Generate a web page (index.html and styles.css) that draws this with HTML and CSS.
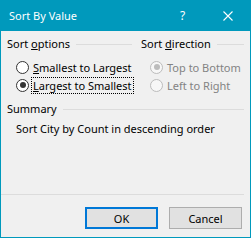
FILE: index.html
```html
<!DOCTYPE html>
<html lang="en">
<head>
    <meta charset="UTF-8">
    <title>Sort By Value</title>
    <link rel="stylesheet" href="styles.css">
</head>
<body>
    <div class="dialog">
        <div class="titlebar">
            <span class="title">Sort By Value</span>
            <span class="help">?</span>
            <span class="close">
                <svg width="10" height="10" viewBox="0 0 10 10">
                    <path d="M0.5 0.5 L9.5 9.5 M9.5 0.5 L0.5 9.5" stroke="#fff" stroke-width="1.1" fill="none"/>
                </svg>
            </span>
        </div>

        <div class="content">
            <div class="groups">
                <div class="group">
                    <div class="group-head"><span>Sort <u>o</u>ptions</span><i class="rule"></i></div>
                    <div class="radio">
                        <span class="circle"></span>
                        <span class="label"><u>S</u>mallest to Largest</span>
                    </div>
                    <div class="radio">
                        <span class="circle checked"></span>
                        <span class="label focused"><u>L</u>argest to Smallest</span>
                    </div>
                </div>
                <div class="group">
                    <div class="group-head"><span>Sort <u>d</u>irection</span><i class="rule"></i></div>
                    <div class="radio disabled">
                        <span class="circle checked"></span>
                        <span class="label">Top to Bottom</span>
                    </div>
                    <div class="radio disabled">
                        <span class="circle"></span>
                        <span class="label">Left to Right</span>
                    </div>
                </div>
            </div>

            <div class="group-head summary-head"><span>Summary</span><i class="rule"></i></div>
            <p class="summary">Sort City by Count in descending order</p>
        </div>

        <div class="footer">
            <div class="buttons">
                <button class="btn default">OK</button>
                <button class="btn">Cancel</button>
            </div>
        </div>
    </div>
</body>
</html>
```

FILE: styles.css
```css
/* dialog window */
body {
    margin: 0;
    font-family: "Noto Sans", "Liberation Sans", sans-serif;
    font-size: 11px;
    color: #000;
}

.dialog {
    width: 251px;
    height: 238px;
    box-sizing: border-box;
    border: 1px solid #0099bc;
    border-top: none;
    background-color: #f0f0f0;
    display: flex;
    flex-direction: column;
}

.titlebar {
    height: 31px;
    flex: none;
    margin: 0 -1px;
    background-color: #0099bc;
    color: #fff;
    display: flex;
    align-items: center;
}

.title {
    flex: 1;
    padding-left: 9px;
    font-size: 11px;
}

.help {
    width: 45px;
    text-align: center;
    font-size: 12px;
}

.close {
    width: 46px;
    display: flex;
    justify-content: center;
}

/* body */
.content {
    flex: 1;
    padding: 5px 6px 0 6px;
}

.groups {
    display: grid;
    grid-template-columns: 125px 1fr;
    column-gap: 9px;
}

.group-head {
    display: flex;
    align-items: center;
    height: 16px;
    line-height: 16px;
}

.rule {
    flex: 1;
    height: 1px;
    margin-left: 6px;
    background-color: #dcdcdc;
}

.group .group-head {
    margin-bottom: 6px;
}

.radio {
    display: flex;
    align-items: center;
    height: 18px;
    padding-left: 9px;
}

.circle {
    width: 11px;
    height: 11px;
    border: 1px solid #333;
    border-radius: 50%;
    background-color: #fff;
    display: flex;
    align-items: center;
    justify-content: center;
    flex: none;
}

.circle.checked::after {
    content: "";
    width: 6px;
    height: 6px;
    border-radius: 50%;
    background-color: #333;
}

.label {
    margin-left: 2px;
    padding: 0 1px;
    border: 1px solid transparent;
    line-height: 15px;
    white-space: nowrap;
}

.label.focused {
    border: 1px dotted #000;
}

.radio.disabled {
    color: #838383;
}

.radio.disabled .circle {
    border-color: #bcbcbc;
    background-color: #f7f7f7;
}

.radio.disabled .circle.checked::after {
    background-color: #bcbcbc;
}

.summary-head {
    margin-top: 7px;
}

.summary {
    margin: 4px 0 0 9px;
    line-height: 16px;
}

/* footer */
.footer {
    flex: none;
    border-top: 1px solid #dcdcdc;
    margin-right: 6px;
}

.buttons {
    display: flex;
    justify-content: flex-end;
    gap: 11px;
    padding: 12px 2px 8px 0;
}

.btn {
    width: 73px;
    height: 22px;
    box-sizing: border-box;
    background-color: #e1e1e1;
    border: 1px solid #adadad;
    font-family: inherit;
    font-size: 11px;
    color: #000;
    padding: 0;
}

.btn.default {
    border: 2px solid #0078d7;
}
```
